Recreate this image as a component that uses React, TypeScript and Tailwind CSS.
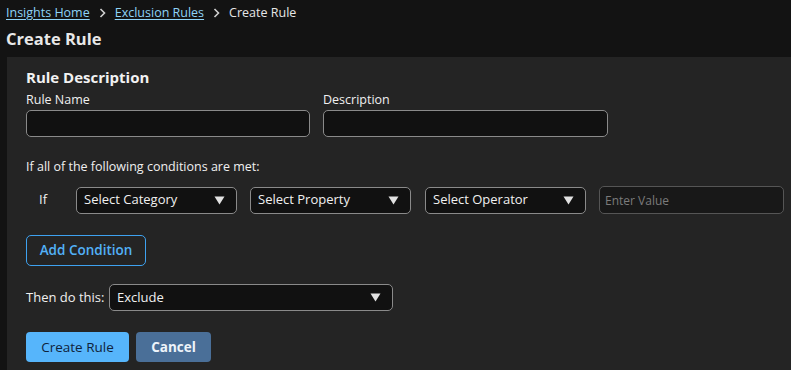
import React, { useState } from 'react'

const Caret = () => (
  <svg width="11" height="9" viewBox="0 0 11 9" className="shrink-0">
    <path d="M0.5 0.5 L10.5 0.5 L5.5 8.5 Z" fill="#e2e2e2" />
  </svg>
)

const Chevron = () => (
  <svg width="7" height="10" viewBox="0 0 7 10" className="mx-[9px] shrink-0">
    <path d="M1.5 1 L5.5 5 L1.5 9" stroke="#d0d0d0" strokeWidth="1.6" fill="none" />
  </svg>
)

const Select = ({ label, className }: { label: string; className: string }) => (
  <div
    className={`flex shrink-0 items-center justify-between h-[27px] rounded-[5px] border border-solid border-[#8a8a8a] bg-[#111111] pl-[7px] pr-[11px] text-[13px] text-[#f0f0f0] ${className}`}
  >
    <span>{label}</span>
    <Caret />
  </div>
)

const App = () => {
  const [ruleName, setRuleName] = useState('')
  const [description, setDescription] = useState('')
  const [value, setValue] = useState('')

  return (
    <div className="h-[370px] w-full overflow-hidden bg-[#131313] text-[#ececec] font-['Open_Sans',sans-serif]">
      {/* breadcrumb + title */}
      <div className="pl-[6px] pt-[3px]">
        <div className="flex items-center text-[12.5px] leading-[20px]">
          <a href="#" className="text-[#8fd3f7] underline underline-offset-2">Insights Home</a>
          <Chevron />
          <a href="#" className="text-[#8fd3f7] underline underline-offset-2">Exclusion Rules</a>
          <Chevron />
          <span className="text-[#e6e6e6]">Create Rule</span>
        </div>
        <h1 className="mt-[4px] text-[16.5px] font-bold leading-[24px] text-[#e8e8e8]">Create Rule</h1>
      </div>

      <div className="ml-[7px] mt-[6px] h-full bg-[#242424] px-[19px] pt-[9px]">
        <h2 className="text-[15px] font-bold leading-[22px] text-[#f2f2f2]">Rule Description</h2>

        <div className="mt-[3px] flex gap-[13px]">
          <div className="flex flex-col">
            <label className="text-[12.5px] leading-[17px] text-[#f0f0f0]">Rule Name</label>
            <input
              value={ruleName}
              onChange={(e) => setRuleName(e.target.value)}
              className="mt-[2px] h-[27px] w-[284px] rounded-[5px] border border-solid border-[#8a8a8a] bg-[#111111] px-2 text-[13px] outline-none"
            />
          </div>
          <div className="flex flex-col">
            <label className="text-[12.5px] leading-[17px] text-[#f0f0f0]">Description</label>
            <input
              value={description}
              onChange={(e) => setDescription(e.target.value)}
              className="mt-[2px] h-[27px] w-[285px] rounded-[5px] border border-solid border-[#8a8a8a] bg-[#111111] px-2 text-[13px] outline-none"
            />
          </div>
        </div>

        <p className="mt-[21px] text-[12.5px] leading-[18px] text-[#f0f0f0]">If all of the following conditions are met:</p>

        <div className="mt-[10px] flex items-center">
          <span className="w-[50px] shrink-0 pl-[13px] text-[13px] text-[#f0f0f0]">If</span>
          <Select label="Select Category" className="w-[161px]" />
          <Select label="Select Property" className="ml-[13px] w-[161px]" />
          <Select label="Select Operator" className="ml-[14px] w-[161px]" />
          <input
            value={value}
            onChange={(e) => setValue(e.target.value)}
            placeholder="Enter Value"
            className="ml-[13px] h-[28px] w-[185px] shrink-0 rounded-[5px] border border-solid border-[#555555] bg-[#181818] px-[5px] text-[12px] text-[#e0e0e0] placeholder:text-[#7b7b7b] outline-none"
          />
        </div>

        <button className="mt-[21px] h-[31px] w-[120px] rounded-[5px] border border-solid border-[#3ea2f0] text-[13.5px] font-semibold text-[#52b1f7]">
          Add Condition
        </button>

        <div className="mt-[18px] flex items-center">
          <span className="w-[83px] shrink-0 text-[13px] text-[#f0f0f0]">Then do this:</span>
          <Select label="Exclude" className="w-[284px]" />
        </div>

        <div className="mt-[21px] flex gap-[7px]">
          <button className="h-[30px] w-[103px] rounded-[4px] bg-[#56b5fb] text-[13.5px] text-[#10233a]">Create Rule</button>
          <button className="h-[30px] w-[75px] rounded-[4px] bg-[#4a6f98] text-[13.5px] font-bold text-[#eef4fa]">Cancel</button>
        </div>
      </div>
    </div>
  )
}

export default App
